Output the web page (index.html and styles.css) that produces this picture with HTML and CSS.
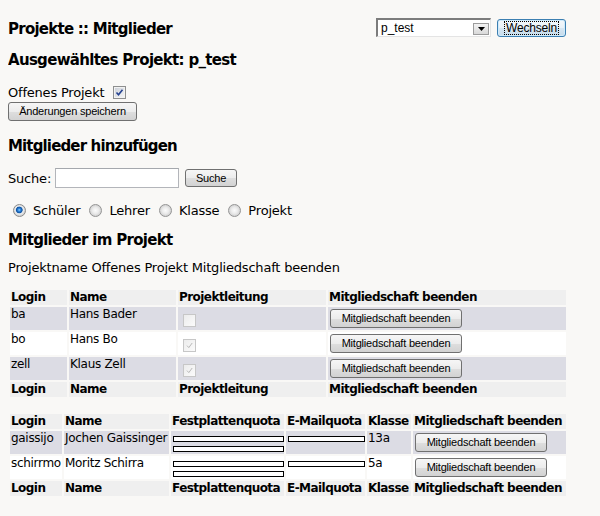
FILE: index.html
```html
<!DOCTYPE html>
<html lang="de">
<head>
<meta charset="utf-8">
<title>Projekte :: Mitglieder</title>
<link rel="stylesheet" href="styles.css">
</head>
<body>
<div class="page">
  <div class="topbar">
    <h1 class="title">Projekte :: Mitglieder</h1>
    <form class="switch">
      <div class="select">
        <span class="select-value">p_test</span>
        <span class="select-btn"><svg width="7" height="4" viewBox="0 0 7 4"><path d="M0 0h7L3.5 4z" fill="#000"/></svg></span>
      </div>
      <button type="button" class="btn btn-go"><span class="focus-ring">Wechseln</span></button>
    </form>
  </div>

  <h2 class="heading selected">Ausgewähltes Projekt: p_test</h2>

  <div class="open-row">
    <span>Offenes Projekt</span>
    <span class="check checked"><svg width="11" height="11" viewBox="0 0 11 11"><path d="M2.5 5.5l2 2.2 4-5" fill="none" stroke="#24418f" stroke-width="1.6"/></svg></span>
  </div>
  <button type="button" class="btn btn-save">Änderungen speichern</button>

  <h2 class="heading add">Mitglieder hinzufügen</h2>
  <div class="search-row">
    <span class="search-label">Suche:</span>
    <span class="input"></span>
    <button type="button" class="btn btn-search">Suche</button>
  </div>

  <div class="radio-row">
    <span class="radio-opt"><span class="radio on"></span>Schüler</span>
    <span class="radio-opt"><span class="radio"></span>Lehrer</span>
    <span class="radio-opt"><span class="radio"></span>Klasse</span>
    <span class="radio-opt"><span class="radio"></span>Projekt</span>
  </div>

  <h2 class="heading members">Mitglieder im Projekt</h2>
  <p class="legend">Projektname Offenes Projekt Mitgliedschaft beenden</p>

  <table class="grid t1">
    <thead>
      <tr class="head">
        <th class="w57">Login</th><th class="w107">Name</th><th class="w148">Projektleitung</th><th class="w238">Mitgliedschaft beenden</th>
      </tr>
    </thead>
    <tbody>
      <tr class="row odd">
        <td>ba</td><td>Hans Bader</td>
        <td><span class="check dis"></span></td>
        <td><button type="button" class="btn btn-end">Mitgliedschaft beenden</button></td>
      </tr>
      <tr class="row even">
        <td>bo</td><td>Hans Bo</td>
        <td><span class="check dis"><svg width="11" height="11" viewBox="0 0 11 11"><path d="M3 5.6l1.8 2 3.4-4.6" fill="none" stroke="#b9b9b9" stroke-width="1"/></svg></span></td>
        <td><button type="button" class="btn btn-end">Mitgliedschaft beenden</button></td>
      </tr>
      <tr class="row odd">
        <td>zell</td><td>Klaus Zell</td>
        <td><span class="check dis"><svg width="11" height="11" viewBox="0 0 11 11"><path d="M3 5.6l1.8 2 3.4-4.6" fill="none" stroke="#b9b9b9" stroke-width="1"/></svg></span></td>
        <td><button type="button" class="btn btn-end">Mitgliedschaft beenden</button></td>
      </tr>
    </tbody>
    <tfoot>
      <tr class="head">
        <th>Login</th><th>Name</th><th>Projektleitung</th><th>Mitgliedschaft beenden</th>
      </tr>
    </tfoot>
  </table>

  <table class="grid t2">
    <thead>
      <tr class="head">
        <th class="w52">Login</th><th class="w105">Name</th><th class="w113">Festplattenquota</th><th class="w79">E-Mailquota</th><th class="w44">Klasse</th><th class="w153">Mitgliedschaft beenden</th>
      </tr>
    </thead>
    <tbody>
      <tr class="row odd">
        <td>gaissijo</td><td>Jochen Gaissinger</td>
        <td><div class="bar disk"></div><div class="bar disk"></div></td>
        <td><div class="bar mail"></div></td>
        <td>13a</td>
        <td><button type="button" class="btn btn-end">Mitgliedschaft beenden</button></td>
      </tr>
      <tr class="row even">
        <td>schirrmo</td><td>Moritz Schirra</td>
        <td><div class="bar disk"></div><div class="bar disk"></div></td>
        <td><div class="bar mail"></div></td>
        <td>5a</td>
        <td><button type="button" class="btn btn-end">Mitgliedschaft beenden</button></td>
      </tr>
    </tbody>
    <tfoot>
      <tr class="head">
        <th>Login</th><th>Name</th><th>Festplattenquota</th><th>E-Mailquota</th><th>Klasse</th><th>Mitgliedschaft beenden</th>
      </tr>
    </tfoot>
  </table>
</div>
</body>
</html>
```

FILE: styles.css
```css
body {
  margin: 8px;
  background: #f9f8f6;
  color: #000;
  font-family: "DejaVu Sans", Verdana, sans-serif;
  font-size: 13px;
  letter-spacing: -0.2px;
}

.page {
  width: 560px;
}

/* ---------- top bar ---------- */
.topbar {
  display: flex;
  justify-content: space-between;
  align-items: flex-start;
  margin-top: 10px;
  height: 20px;
}

.title {
  margin: 2px 0 0;
  font-size: 15px;
  line-height: 18px;
  letter-spacing: -0.75px;
  font-weight: bold;
}

.switch {
  display: flex;
  gap: 6px;
  margin: 0 2px 0 0;
}

.select {
  position: relative;
  display: flex;
  align-items: center;
  width: 115px;
  height: 19px;
  box-sizing: border-box;
  border-top: 2px solid #7c7c7c;
  border-left: 2px solid #7c7c7c;
  border-right: 1px solid #e4e4e4;
  border-bottom: 1px solid #e4e4e4;
  background: #fff;
  padding-left: 3px;
  font-family: "Liberation Sans", Arial, sans-serif;
  font-size: 12px;
  letter-spacing: 0;
}

.select-value {
  flex: 1;
  line-height: 14px;
}

.select-btn {
  display: flex;
  align-items: center;
  justify-content: center;
  width: 16px;
  height: 12px;
  box-sizing: border-box;
  margin: 1px 1px 0 0;
  border: 1px solid #9c9c9c;
  background: linear-gradient(#f3f3f3, #d9d9d9);
}

.btn {
  display: inline-flex;
  align-items: center;
  justify-content: center;
  box-sizing: border-box;
  height: 19px;
  padding: 0;
  border: 1px solid #707070;
  border-radius: 3px;
  background: linear-gradient(#f6f6f6 0%, #ececec 50%, #dedede 52%, #d2d2d2 100%);
  color: #000;
  font-family: "Liberation Sans", Arial, sans-serif;
  font-size: 11px;
  letter-spacing: -0.2px;
  line-height: 13px;
}

.btn-go {
  width: 69px;
  height: 18px;
  margin-top: 1px;
  border-color: #3c7fb1;
  box-shadow: inset 0 0 0 1px #cfeafb;
  background: linear-gradient(#f4f8fb 0%, #e8f1f8 50%, #d6e6f2 52%, #c6dbeb 100%);
  font-size: 12px;
}

.focus-ring {
  border: 1px dotted #000;
  padding: 0 1px;
  line-height: 12px;
}

/* ---------- headings & rows ---------- */
.heading {
  margin: 0;
  font-size: 15px;
  line-height: 18px;
  letter-spacing: -0.7px;
  font-weight: bold;
}

.selected { margin-top: 13px; }
.add { margin-top: 16px; letter-spacing: -0.85px; }
.members { margin-top: 13px; }

.open-row {
  display: flex;
  align-items: flex-start;
  margin-top: 16px;
  line-height: 16px;
}

.check {
  display: inline-flex;
  align-items: center;
  justify-content: center;
  width: 13px;
  height: 13px;
  box-sizing: border-box;
}

.check.checked {
  margin: 1px 0 0 9px;
  border: 1px solid #8e8f8f;
  box-shadow: inset 0 0 0 1px #f2f2f2;
  background: linear-gradient(135deg, #c9ced6, #f7f7f7);
}

.check.dis {
  display: flex;
  margin: 7px 0 0 4px;
  border: 1px solid #c7c7c7;
  background: linear-gradient(135deg, #ececec, #fbfbfb);
}

.btn-save {
  display: flex;
  width: 129px;
  margin-top: 1px;
}

.search-row {
  display: flex;
  align-items: center;
  height: 20px;
  margin-top: 13px;
}

.input {
  width: 124px;
  height: 20px;
  box-sizing: border-box;
  margin-left: 4px;
  border: 1px solid #b3b5ba;
  border-top-color: #a5a8ad;
  background: #fff;
}

.btn-search {
  width: 52px;
  height: 18px;
  margin-left: 6px;
}

.radio-row {
  display: flex;
  align-items: center;
  height: 16px;
  margin-top: 14px;
}

.radio-opt {
  display: flex;
  align-items: center;
}

.radio-opt + .radio-opt {
  margin-left: 4px;
}

.radio {
  width: 13px;
  height: 13px;
  box-sizing: border-box;
  margin: 0 7px 0 5px;
  border-radius: 50%;
  border: 1px solid #949494;
  background: radial-gradient(circle at 50% 50%, #fbfbfb 0, #ececec 3px, #d4d4d4 5.5px);
}

.radio.on {
  border-color: #8a8a8a;
  background: radial-gradient(circle at 48% 45%, #8fd0ff 0, #2f86dc 1.4px, #0d4f9f 3px, #c9d9e8 3.6px, #ececec 4.2px, #d4d4d4 5.5px);
}

.legend {
  margin: 11px 0 0;
  line-height: 16px;
}

/* ---------- tables ---------- */
.grid {
  width: 560px;
  table-layout: fixed;
  border-collapse: separate;
  border-spacing: 2px;
}

.t1 { margin-top: 12px; }
.t2 { margin-top: 13px; }

.grid th,
.grid td {
  box-sizing: border-box;
  padding: 0 1px;
  text-align: left;
  vertical-align: top;
  white-space: nowrap;
  line-height: 15px;
}

.grid th {
  height: 15px;
  background: #efefef;
  font-size: 12px;
  letter-spacing: -0.55px;
  font-weight: bold;
}

.grid td {
  font-size: 12px;
  letter-spacing: -0.3px;
}

.grid .row { height: 23px; }
.grid .odd td { background: #dcdce4; }
.grid .even td { background: #fff; }

.w57 { width: 57px; }
.w107 { width: 107px; }
.w148 { width: 148px; }
.w238 { width: 238px; }
.w52 { width: 52px; }
.w105 { width: 105px; }
.w113 { width: 113px; }
.w79 { width: 79px; }
.w44 { width: 44px; }
.w153 { width: 153px; }

.btn-end {
  display: flex;
  width: 132px;
  margin: 2px 0 0 1px;
}

.bar {
  height: 6px;
  box-sizing: border-box;
  margin: 5px 0 0 1px;
  border: 1px solid #000;
  background: #fff;
}

.bar + .bar { margin-top: 4px; }
.bar.disk { width: 111px; }
.bar.mail { width: 77px; }
```
